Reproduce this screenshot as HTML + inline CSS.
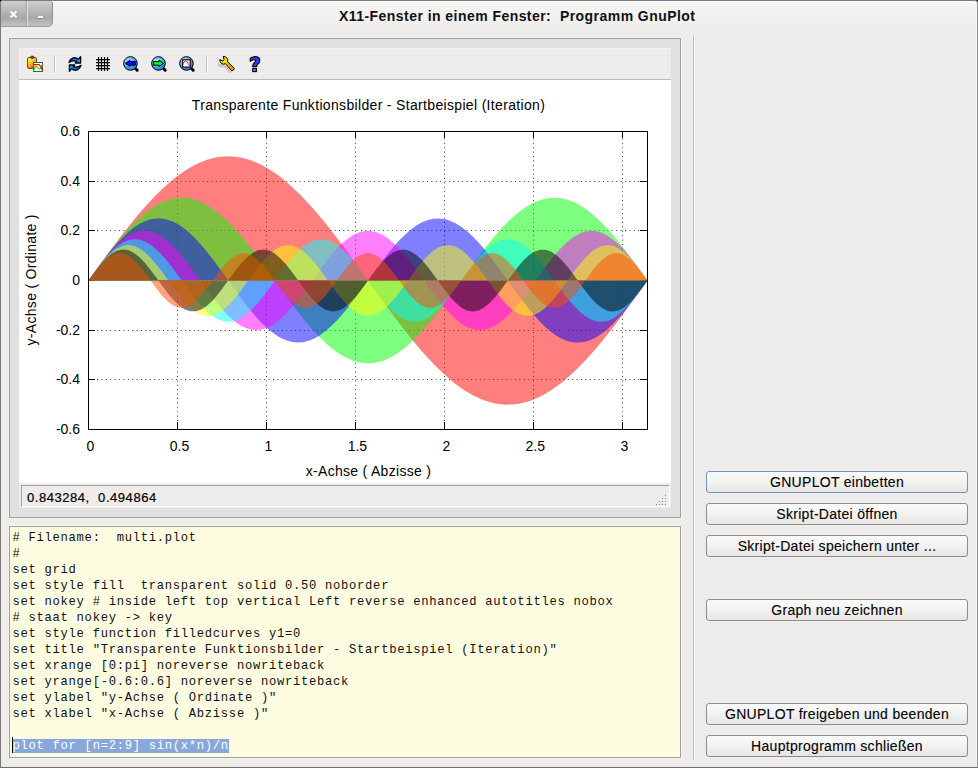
<!DOCTYPE html>
<html><head><meta charset="utf-8">
<style>
html,body{margin:0;padding:0;width:978px;height:768px;overflow:hidden;background:#000}
body{position:relative;font-family:"Liberation Sans",sans-serif}
.win{position:absolute;left:0;top:0;width:978px;height:768px;background:#edeceb;border-radius:4px 4px 0 0;overflow:hidden}
.abs{position:absolute}
.titlebar{position:absolute;left:0;top:0;width:978px;height:34px;background:linear-gradient(#f6f6f5,#edeceb)}
.title{position:absolute;left:339px;top:8px;font-weight:bold;font-size:14px;letter-spacing:0.45px;color:#111;white-space:pre}
.tbtn{position:absolute;top:1px;background:linear-gradient(#cfcecc 0%,#b6b5b3 45%,#a9a8a6 68%,#c4c3c1 100%)}
.group{position:absolute;left:9px;top:38px;width:670px;height:478px;border:1px solid #a19e9b;box-shadow:-1px -1px 0 #f6f5f4, 1px 1px 0 #f6f5f4;background:#e0e0e0}
.toolbar{position:absolute;left:19px;top:48px;width:652px;height:31px;background:#edeceb;box-shadow:inset 1px 1px 0 #f3f2f1}
.plotbg{position:absolute;left:19px;top:80px;width:652px;height:403px;background:#fff}
.tline{position:absolute;left:19px;top:79px;width:652px;height:1px;background:#bcbab8}
.status{position:absolute;left:19px;top:483px;width:652px;height:25px;background:#edeceb}
.sbox{position:absolute;left:21px;top:485px;width:647px;height:20px;border-top:1px solid #a19e9b;border-left:1px solid #a19e9b;border-right:1px solid #fff;border-bottom:1px solid #fff}
.stext{position:absolute;left:27px;top:490px;font-size:13px;letter-spacing:0.55px;color:#000;-webkit-text-stroke:0.2px #000;white-space:pre}
.grip{position:absolute;width:1px;height:1px;background:#8a8886}
.editor{position:absolute;left:9px;top:526px;width:670px;height:230px;border:1px solid #a19e9b;box-shadow:-1px -1px 0 #f6f5f4, 1px 1px 0 #f6f5f4;background:#fffde1}
pre.code{position:absolute;left:12.5px;top:530px;margin:0;font-family:"Liberation Mono",monospace;font-size:12.2px;letter-spacing:0.7px;line-height:16px;color:#111}
.sel{background:#87a8d8;color:#fff}
.splitter{position:absolute;left:693px;top:36px;width:1px;height:724px;background:#c0bfbd;border-right:1px solid #fff}
.btn{position:absolute;left:706px;width:260px;height:20px;border:1px solid #8e8d8b;border-radius:3px;background:linear-gradient(#fbfbfb,#f2f2f1 50%,#e6e5e4);text-align:center;font-size:14px;line-height:20px;letter-spacing:0.3px;color:#000;white-space:pre;-webkit-text-stroke:0.1px #000}
.btn.def{border-color:#7593c0}
svg.plot{position:absolute;left:0;top:0}
.frame{position:absolute;left:0;top:0;width:978px;height:768px;box-sizing:border-box;border:1px solid;border-color:#7a7a7a #8c8c8c #6e6e6e #787878;border-radius:4px 4px 0 0;box-shadow:0 0 0 12px #000, inset -1px 0 0 #fafafa}
</style></head><body>
<div class="win">
<div class="titlebar"></div>
<div class="tbtn" style="left:1px;width:51px;height:25px;border-right:1px solid #8f8f8e;border-bottom:1px solid #9e9e9d;border-radius:4px 0 5px 0"></div>
<div class="abs" style="left:26px;top:1px;width:1px;height:25px;background:#a3a3a1"></div><div class="abs" style="left:27px;top:1px;width:1px;height:25px;background:#e4e4e2"></div>
<svg class="abs" style="left:0;top:0" width="60" height="30"><path d="M10.5 12.2L16.5 18.2M16.5 12.2L10.5 18.2" stroke="#777" stroke-width="2.2" opacity="0.5"/><path d="M10.5 11.5L16.5 17.5M16.5 11.5L10.5 17.5" stroke="#fff" stroke-width="2.2"/><rect x="38" y="18" width="5" height="1" fill="#8a8a8a"/><rect x="38" y="16" width="5" height="2" fill="#fff"/></svg>
<div class="abs" style="left:52px;top:1px;width:925px;height:1px;background:#fdfdfd"></div>
<div class="title">X11-Fenster in einem Fenster:  Programm GnuPlot</div>
<div class="group"></div>
<div class="toolbar"></div>
<div class="tline"></div>
<div class="plotbg"></div>
<div class="status"></div>
<div class="sbox"></div>
<div class="stext">0.843284,  0.494864</div>
<div class="grip" style="left:665px;top:495px"></div><div class="grip" style="left:665px;top:498px"></div><div class="grip" style="left:662px;top:498px"></div><div class="grip" style="left:665px;top:501px"></div><div class="grip" style="left:662px;top:501px"></div><div class="grip" style="left:659px;top:501px"></div><div class="grip" style="left:665px;top:504px"></div><div class="grip" style="left:662px;top:504px"></div><div class="grip" style="left:659px;top:504px"></div><div class="grip" style="left:656px;top:504px"></div>
<div class="editor"></div>
<pre class="code"># Filename:  multi.plot
#
set grid
set style fill  transparent solid 0.50 noborder
set nokey # inside left top vertical Left reverse enhanced autotitles nobox
# staat nokey -&gt; key
set style function filledcurves y1=0
set title &quot;Transparente Funktionsbilder - Startbeispiel (Iteration)&quot;
set xrange [0:pi] noreverse nowriteback
set yrange[-0.6:0.6] noreverse nowriteback
set ylabel &quot;y-Achse ( Ordinate )&quot;
set xlabel &quot;x-Achse ( Abzisse )&quot;

<span class="sel">plot for [n=2:9] sin(x*n)/n</span></pre>
<div class="abs" style="left:12px;top:737px;width:1px;height:16px;background:#000"></div>
<div class="splitter"></div>
<div class="btn def" style="top:471px">GNUPLOT einbetten</div><div class="btn" style="top:503px">Skript-Datei öffnen</div><div class="btn" style="top:535px">Skript-Datei speichern unter ...</div><div class="btn" style="top:599px">Graph neu zeichnen</div><div class="btn" style="top:703px">GNUPLOT freigeben und beenden</div><div class="btn" style="top:735px">Hauptprogramm schließen</div>
<svg class="plot" width="978" height="768" viewBox="0 0 978 768">
<g fill="none" stroke="#000" stroke-width="1" stroke-dasharray="1 3.4" opacity="0.75"><line x1="177.5" y1="421" x2="177.5" y2="131" /><line x1="266.5" y1="421" x2="266.5" y2="131" /><line x1="355.5" y1="421" x2="355.5" y2="131" /><line x1="444.5" y1="421" x2="444.5" y2="131" /><line x1="533.5" y1="421" x2="533.5" y2="131" /><line x1="622.5" y1="421" x2="622.5" y2="131" /><line x1="97" y1="379.5" x2="647" y2="379.5" /><line x1="97" y1="330.5" x2="647" y2="330.5" /><line x1="97" y1="280.5" x2="647" y2="280.5" /><line x1="97" y1="230.5" x2="647" y2="230.5" /><line x1="97" y1="181.5" x2="647" y2="181.5" /></g>
<path d="M177.5 429V422M177.5 131V138M266.5 429V422M266.5 131V138M355.5 429V422M355.5 131V138M444.5 429V422M444.5 131V138M533.5 429V422M533.5 131V138M622.5 429V422M622.5 131V138M88 429.5H95M647 429.5H640M88 379.5H95M647 379.5H640M88 330.5H95M647 330.5H640M88 280.5H95M647 280.5H640M88 230.5H95M647 230.5H640M88 181.5H95M647 181.5H640M88 131.5H95M647 131.5H640" stroke="#000" stroke-width="1" fill="none"/>
<path d="M88.5 280.5L88.50 280.50L94.15 272.62L99.79 264.78L105.44 257.00L111.09 249.32L116.73 241.76L122.38 234.35L128.03 227.13L133.67 220.13L139.32 213.37L144.96 206.88L150.61 200.69L156.26 194.82L161.90 189.29L167.55 184.13L173.20 179.36L178.84 174.99L184.49 171.05L190.14 167.55L195.78 164.51L201.43 161.93L207.08 159.83L212.72 158.22L218.37 157.10L224.02 156.47L229.66 156.35L235.31 156.72L240.95 157.60L246.60 158.97L252.25 160.82L257.89 163.16L263.54 165.97L269.19 169.25L274.83 172.97L280.48 177.12L286.13 181.69L291.77 186.66L297.42 192.01L303.07 197.71L308.71 203.75L314.36 210.09L320.01 216.72L325.65 223.60L331.30 230.72L336.94 238.03L342.59 245.52L348.24 253.14L353.88 260.88L359.53 268.70L365.18 276.56L370.82 284.44L376.47 292.30L382.12 300.12L387.76 307.86L393.41 315.48L399.06 322.97L404.70 330.28L410.35 337.40L415.99 344.28L421.64 350.91L427.29 357.25L432.93 363.29L438.58 368.99L444.23 374.34L449.87 379.31L455.52 383.88L461.17 388.03L466.81 391.75L472.46 395.03L478.11 397.84L483.75 400.18L489.40 402.03L495.05 403.40L500.69 404.28L506.34 404.65L511.98 404.53L517.63 403.90L523.28 402.78L528.92 401.17L534.57 399.07L540.22 396.49L545.86 393.45L551.51 389.95L557.16 386.01L562.80 381.64L568.45 376.87L574.10 371.71L579.74 366.18L585.39 360.31L591.04 354.12L596.68 347.63L602.33 340.87L607.97 333.87L613.62 326.65L619.27 319.24L624.91 311.68L630.56 304.00L636.21 296.22L641.85 288.38L647.50 280.50L647.5 280.5 Z" fill="#ff0000" fill-opacity="0.5"/>
<path d="M88.5 280.5L88.50 280.50L94.15 272.63L99.79 264.83L105.44 257.18L111.09 249.73L116.73 242.57L122.38 235.75L128.03 229.33L133.67 223.38L139.32 217.94L144.96 213.07L150.61 208.81L156.26 205.20L161.90 202.27L167.55 200.06L173.20 198.56L178.84 197.82L184.49 197.82L190.14 198.56L195.78 200.06L201.43 202.27L207.08 205.20L212.72 208.81L218.37 213.07L224.02 217.94L229.66 223.38L235.31 229.33L240.95 235.75L246.60 242.57L252.25 249.73L257.89 257.18L263.54 264.83L269.19 272.63L274.83 280.50L280.48 288.37L286.13 296.17L291.77 303.82L297.42 311.27L303.07 318.43L308.71 325.25L314.36 331.67L320.01 337.62L325.65 343.06L331.30 347.93L336.94 352.19L342.59 355.80L348.24 358.73L353.88 360.94L359.53 362.44L365.18 363.18L370.82 363.18L376.47 362.44L382.12 360.94L387.76 358.73L393.41 355.80L399.06 352.19L404.70 347.93L410.35 343.06L415.99 337.62L421.64 331.67L427.29 325.25L432.93 318.43L438.58 311.27L444.23 303.82L449.87 296.17L455.52 288.37L461.17 280.50L466.81 272.63L472.46 264.83L478.11 257.18L483.75 249.73L489.40 242.57L495.05 235.75L500.69 229.33L506.34 223.38L511.98 217.94L517.63 213.07L523.28 208.81L528.92 205.20L534.57 202.27L540.22 200.06L545.86 198.56L551.51 197.82L557.16 197.82L562.80 198.56L568.45 200.06L574.10 202.27L579.74 205.20L585.39 208.81L591.04 213.07L596.68 217.94L602.33 223.38L607.97 229.33L613.62 235.75L619.27 242.57L624.91 249.73L630.56 257.18L636.21 264.83L641.85 272.63L647.50 280.50L647.5 280.5 Z" fill="#00ff00" fill-opacity="0.5"/>
<path d="M88.5 280.5L88.50 280.50L94.15 272.64L99.79 264.91L105.44 257.43L111.09 250.32L116.73 243.69L122.38 237.66L128.03 232.31L133.67 227.75L139.32 224.03L144.96 221.22L150.61 219.36L156.26 218.49L161.90 218.61L167.55 219.73L173.20 221.83L178.84 224.87L184.49 228.81L190.14 233.58L195.78 239.10L201.43 245.30L207.08 252.05L212.72 259.27L218.37 266.82L224.02 274.60L229.66 282.47L235.31 290.31L240.95 297.99L246.60 305.39L252.25 312.39L257.89 318.88L263.54 324.75L269.19 329.90L274.83 334.27L280.48 337.76L286.13 340.34L291.77 341.95L297.42 342.58L303.07 342.20L308.71 340.83L314.36 338.50L320.01 335.22L325.65 331.07L331.30 326.11L336.94 320.41L342.59 314.06L348.24 307.18L353.88 299.87L359.53 292.25L365.18 284.44L370.82 276.56L376.47 268.75L382.12 261.13L387.76 253.82L393.41 246.94L399.06 240.59L404.70 234.89L410.35 229.93L415.99 225.78L421.64 222.50L427.29 220.17L432.93 218.80L438.58 218.42L444.23 219.05L449.87 220.66L455.52 223.24L461.17 226.73L466.81 231.10L472.46 236.25L478.11 242.12L483.75 248.61L489.40 255.61L495.05 263.01L500.69 270.69L506.34 278.53L511.98 286.40L517.63 294.18L523.28 301.73L528.92 308.95L534.57 315.70L540.22 321.90L545.86 327.42L551.51 332.19L557.16 336.13L562.80 339.17L568.45 341.27L574.10 342.39L579.74 342.51L585.39 341.64L591.04 339.78L596.68 336.97L602.33 333.25L607.97 328.69L613.62 323.34L619.27 317.31L624.91 310.68L630.56 303.57L636.21 296.09L641.85 288.36L647.50 280.50L647.5 280.5 Z" fill="#0000ff" fill-opacity="0.5"/>
<path d="M88.5 280.5L88.50 280.50L94.15 272.65L99.79 265.00L105.44 257.74L111.09 251.05L116.73 245.10L122.38 240.04L128.03 236.00L133.67 233.07L139.32 231.34L144.96 230.84L150.61 231.59L156.26 233.56L161.90 236.72L167.55 240.98L173.20 246.23L178.84 252.34L184.49 259.15L190.14 266.51L195.78 274.21L201.43 282.08L207.08 289.90L212.72 297.49L218.37 304.65L224.02 311.20L229.66 316.98L235.31 321.85L240.95 325.68L246.60 328.37L252.25 329.86L257.89 330.11L263.54 329.11L269.19 326.90L274.83 323.51L280.48 319.05L286.13 313.62L291.77 307.35L297.42 300.41L303.07 292.97L308.71 285.22L314.36 277.35L320.01 269.56L325.65 262.04L331.30 254.99L336.94 248.57L342.59 242.96L348.24 238.30L353.88 234.69L359.53 232.23L365.18 230.99L370.82 230.99L376.47 232.23L382.12 234.69L387.76 238.30L393.41 242.96L399.06 248.57L404.70 254.99L410.35 262.04L415.99 269.56L421.64 277.35L427.29 285.22L432.93 292.97L438.58 300.41L444.23 307.35L449.87 313.62L455.52 319.05L461.17 323.51L466.81 326.90L472.46 329.11L478.11 330.11L483.75 329.86L489.40 328.37L495.05 325.68L500.69 321.85L506.34 316.98L511.98 311.20L517.63 304.65L523.28 297.49L528.92 289.90L534.57 282.08L540.22 274.21L545.86 266.51L551.51 259.15L557.16 252.34L562.80 246.23L568.45 240.98L574.10 236.72L579.74 233.56L585.39 231.59L591.04 230.84L596.68 231.34L602.33 233.07L607.97 236.00L613.62 240.04L619.27 245.10L624.91 251.05L630.56 257.74L636.21 265.00L641.85 272.65L647.50 280.50L647.5 280.5 Z" fill="#ff00ff" fill-opacity="0.5"/>
<path d="M88.5 280.5L88.50 280.50L94.15 272.67L99.79 265.12L105.44 258.12L111.09 251.94L116.73 246.79L122.38 242.85L128.03 240.28L133.67 239.16L139.32 239.53L144.96 241.39L150.61 244.66L156.26 249.22L161.90 254.92L167.55 261.53L173.20 268.84L178.84 276.57L184.49 284.43L190.14 292.16L195.78 299.47L201.43 306.08L207.08 311.78L212.72 316.34L218.37 319.61L224.02 321.47L229.66 321.84L235.31 320.72L240.95 318.15L246.60 314.21L252.25 309.06L257.89 302.88L263.54 295.88L269.19 288.33L274.83 280.50L280.48 272.67L286.13 265.12L291.77 258.12L297.42 251.94L303.07 246.79L308.71 242.85L314.36 240.28L320.01 239.16L325.65 239.53L331.30 241.39L336.94 244.66L342.59 249.22L348.24 254.92L353.88 261.53L359.53 268.84L365.18 276.57L370.82 284.43L376.47 292.16L382.12 299.47L387.76 306.08L393.41 311.78L399.06 316.34L404.70 319.61L410.35 321.47L415.99 321.84L421.64 320.72L427.29 318.15L432.93 314.21L438.58 309.06L444.23 302.88L449.87 295.88L455.52 288.33L461.17 280.50L466.81 272.67L472.46 265.12L478.11 258.12L483.75 251.94L489.40 246.79L495.05 242.85L500.69 240.28L506.34 239.16L511.98 239.53L517.63 241.39L523.28 244.66L528.92 249.22L534.57 254.92L540.22 261.53L545.86 268.84L551.51 276.57L557.16 284.43L562.80 292.16L568.45 299.47L574.10 306.08L579.74 311.78L585.39 316.34L591.04 319.61L596.68 321.47L602.33 321.84L607.97 320.72L613.62 318.15L619.27 314.21L624.91 309.06L630.56 302.88L636.21 295.88L641.85 288.33L647.50 280.50L647.5 280.5 Z" fill="#00ffff" fill-opacity="0.5"/>
<path d="M88.5 280.5L88.50 280.50L94.15 272.68L99.79 265.25L105.44 258.57L111.09 252.97L116.73 248.71L122.38 246.02L128.03 245.03L133.67 245.78L139.32 248.23L144.96 252.27L150.61 257.70L156.26 264.24L161.90 271.59L167.55 279.37L173.20 287.21L178.84 294.72L184.49 301.53L190.14 307.31L195.78 311.77L201.43 314.69L207.08 315.94L212.72 315.44L218.37 313.22L224.02 309.40L229.66 304.15L235.31 297.75L240.95 290.49L246.60 282.75L252.25 274.89L257.89 267.31L263.54 260.38L269.19 254.44L274.83 249.78L280.48 246.62L286.13 245.14L291.77 245.38L297.42 247.36L303.07 250.96L308.71 256.02L314.36 262.28L320.01 269.43L325.65 277.13L331.30 284.99L336.94 292.63L342.59 299.68L348.24 305.78L353.88 310.65L359.53 314.03L365.18 315.76L370.82 315.76L376.47 314.03L382.12 310.65L387.76 305.78L393.41 299.68L399.06 292.63L404.70 284.99L410.35 277.13L415.99 269.43L421.64 262.28L427.29 256.02L432.93 250.96L438.58 247.36L444.23 245.38L449.87 245.14L455.52 246.62L461.17 249.78L466.81 254.44L472.46 260.38L478.11 267.31L483.75 274.89L489.40 282.75L495.05 290.49L500.69 297.75L506.34 304.15L511.98 309.40L517.63 313.22L523.28 315.44L528.92 315.94L534.57 314.69L540.22 311.77L545.86 307.31L551.51 301.53L557.16 294.72L562.80 287.21L568.45 279.37L574.10 271.59L579.74 264.24L585.39 257.70L591.04 252.27L596.68 248.23L602.33 245.78L607.97 245.03L613.62 246.02L619.27 248.71L624.91 252.97L630.56 258.57L636.21 265.25L641.85 272.68L647.50 280.50L647.5 280.5 Z" fill="#ffff00" fill-opacity="0.5"/>
<path d="M88.5 280.5L88.50 280.50L94.15 272.70L99.79 265.41L105.44 259.08L111.09 254.12L116.73 250.86L122.38 249.49L128.03 250.12L133.67 252.69L139.32 257.04L144.96 262.90L150.61 269.88L156.26 277.55L161.90 285.40L167.55 292.95L173.20 299.69L178.84 305.20L184.49 309.13L190.14 311.23L195.78 311.35L201.43 309.50L207.08 305.79L212.72 300.45L218.37 293.84L224.02 286.37L229.66 278.53L235.31 270.81L240.95 263.72L246.60 257.70L252.25 253.14L257.89 250.33L263.54 249.46L269.19 250.58L274.83 253.62L280.48 258.38L286.13 264.55L291.77 271.75L297.42 279.52L303.07 287.34L308.71 294.72L314.36 301.20L320.01 306.34L325.65 309.83L331.30 311.44L336.94 311.07L342.59 308.74L348.24 304.59L353.88 298.90L359.53 292.04L365.18 284.43L370.82 276.57L376.47 268.96L382.12 262.10L387.76 256.41L393.41 252.26L399.06 249.93L404.70 249.56L410.35 251.17L415.99 254.66L421.64 259.80L427.29 266.28L432.93 273.66L438.58 281.48L444.23 289.25L449.87 296.45L455.52 302.62L461.17 307.38L466.81 310.42L472.46 311.54L478.11 310.67L483.75 307.86L489.40 303.30L495.05 297.28L500.69 290.19L506.34 282.47L511.98 274.63L517.63 267.16L523.28 260.55L528.92 255.21L534.57 251.50L540.22 249.65L545.86 249.77L551.51 251.87L557.16 255.80L562.80 261.31L568.45 268.05L574.10 275.60L579.74 283.45L585.39 291.12L591.04 298.10L596.68 303.96L602.33 308.31L607.97 310.88L613.62 311.51L619.27 310.14L624.91 306.88L630.56 301.92L636.21 295.59L641.85 288.30L647.50 280.50L647.5 280.5 Z" fill="#000000" fill-opacity="0.5"/>
<path d="M88.5 280.5L88.50 280.50L94.15 272.73L99.79 265.58L105.44 259.65L111.09 255.40L116.73 253.19L122.38 253.19L128.03 255.40L133.67 259.65L139.32 265.58L144.96 272.73L150.61 280.50L156.26 288.27L161.90 295.42L167.55 301.35L173.20 305.60L178.84 307.81L184.49 307.81L190.14 305.60L195.78 301.35L201.43 295.42L207.08 288.27L212.72 280.50L218.37 272.73L224.02 265.58L229.66 259.65L235.31 255.40L240.95 253.19L246.60 253.19L252.25 255.40L257.89 259.65L263.54 265.58L269.19 272.73L274.83 280.50L280.48 288.27L286.13 295.42L291.77 301.35L297.42 305.60L303.07 307.81L308.71 307.81L314.36 305.60L320.01 301.35L325.65 295.42L331.30 288.27L336.94 280.50L342.59 272.73L348.24 265.58L353.88 259.65L359.53 255.40L365.18 253.19L370.82 253.19L376.47 255.40L382.12 259.65L387.76 265.58L393.41 272.73L399.06 280.50L404.70 288.27L410.35 295.42L415.99 301.35L421.64 305.60L427.29 307.81L432.93 307.81L438.58 305.60L444.23 301.35L449.87 295.42L455.52 288.27L461.17 280.50L466.81 272.73L472.46 265.58L478.11 259.65L483.75 255.40L489.40 253.19L495.05 253.19L500.69 255.40L506.34 259.65L511.98 265.58L517.63 272.73L523.28 280.50L528.92 288.27L534.57 295.42L540.22 301.35L545.86 305.60L551.51 307.81L557.16 307.81L562.80 305.60L568.45 301.35L574.10 295.42L579.74 288.27L585.39 280.50L591.04 272.73L596.68 265.58L602.33 259.65L607.97 255.40L613.62 253.19L619.27 253.19L624.91 255.40L630.56 259.65L636.21 265.58L641.85 272.73L647.50 280.50L647.5 280.5 Z" fill="#ff4c00" fill-opacity="0.5"/>
<rect x="88.5" y="131.5" width="559" height="298" fill="none" stroke="#000" stroke-width="1"/>
<g font-family="Liberation Sans" font-size="14" fill="#000" letter-spacing="0"><text x="90.5" y="451" text-anchor="middle">0</text><text x="179.5" y="451" text-anchor="middle">0.5</text><text x="268.4" y="451" text-anchor="middle">1</text><text x="357.4" y="451" text-anchor="middle">1.5</text><text x="446.4" y="451" text-anchor="middle">2</text><text x="535.3" y="451" text-anchor="middle">2.5</text><text x="624.3" y="451" text-anchor="middle">3</text><text x="80" y="434.0" text-anchor="end">-0.6</text><text x="80" y="384.3" text-anchor="end">-0.4</text><text x="80" y="334.7" text-anchor="end">-0.2</text><text x="80" y="285.0" text-anchor="end">0</text><text x="80" y="235.3" text-anchor="end">0.2</text><text x="80" y="185.7" text-anchor="end">0.4</text><text x="80" y="136.0" text-anchor="end">0.6</text>
<text x="368.5" y="110.3" text-anchor="middle" letter-spacing="0.33">Transparente Funktionsbilder - Startbeispiel (Iteration)</text>
<text x="368.5" y="476" text-anchor="middle" letter-spacing="0.3">x-Achse ( Abzisse )</text>
<text transform="translate(35.5 279.8) rotate(-90)" text-anchor="middle" letter-spacing="0.3">y-Achse ( Ordinate )</text>
</g>
</svg>
<svg class="icons" width="300" height="90" viewBox="0 0 300 90" style="position:absolute;left:0;top:0">
<defs>
<linearGradient id="gclip" x1="0" y1="0" x2="0.6" y2="1"><stop offset="0" stop-color="#ffff40"/><stop offset="0.4" stop-color="#ffd820"/><stop offset="1" stop-color="#e85800"/></linearGradient>
<linearGradient id="gref" x1="0" y1="0" x2="1" y2="0"><stop offset="0" stop-color="#0030e0"/><stop offset="1" stop-color="#00b0ff"/></linearGradient>
<linearGradient id="gref2" x1="1" y1="0" x2="0" y2="0"><stop offset="0" stop-color="#0030e0"/><stop offset="1" stop-color="#00b0ff"/></linearGradient>
<radialGradient id="glens" cx="0.35" cy="0.3" r="0.75"><stop offset="0" stop-color="#b0e0ff"/><stop offset="0.6" stop-color="#40a8f8"/><stop offset="1" stop-color="#0a80e8"/></radialGradient>
<linearGradient id="gwr" x1="0" y1="0" x2="1" y2="1"><stop offset="0" stop-color="#ffff00"/><stop offset="0.45" stop-color="#ffd000"/><stop offset="0.6" stop-color="#ffa000"/><stop offset="1" stop-color="#ff9000"/></linearGradient>
<filter id="blur1" x="-20%" y="-20%" width="140%" height="140%"><feGaussianBlur stdDeviation="0.7"/></filter>
</defs>
<!-- clipboard -->
<rect x="27.5" y="57.5" width="9" height="11" rx="1.5" fill="url(#gclip)" stroke="#4a3410" stroke-width="0.85"/>
<rect x="30.5" y="56" width="3.5" height="2.5" rx="1" fill="#555" stroke="#333" stroke-width="0.6"/>
<rect x="33.5" y="62.5" width="9" height="9" fill="#fff" stroke="#555" stroke-width="1"/>
<path d="M33.8 71 Q34.5 66 35.8 66.3 Q37 66.5 38.5 68.5 Q39.8 69.5 41 67.5 L42.4 64.2" fill="none" stroke="#00e000" stroke-width="1.1"/>
<path d="M33.8 64.6 L39 64.6 Q40.2 64.8 42.4 70.5" fill="none" stroke="#f00" stroke-width="1.1"/>
<!-- separator -->
<rect x="54" y="55" width="1" height="18" fill="#c6c5c3"/><rect x="55" y="55" width="1" height="18" fill="#fbfbfa"/>
<!-- refresh -->
<path d="M69 62.5 C70 58.5 75 56 78.2 59.4 L80.6 56.8 L80.6 63 L75.3 63 L76.8 61.4 C75 60.8 72 60.6 69 62.5 Z" fill="url(#gref)" stroke="#000" stroke-width="1.3" stroke-linejoin="round"/>
<path d="M81 65.4 C80 69.5 75 72 71.8 68.6 L69.4 71.2 L69.4 65 L74.7 65 L73.2 66.6 C75 67.2 78 67.4 81 65.4 Z" fill="url(#gref2)" stroke="#000" stroke-width="1.3" stroke-linejoin="round"/>
<!-- grid -->
<rect x="96" y="57" width="14" height="14" rx="2" fill="#fff" opacity="0.85"/>
<path d="M98.5 57V71M101.5 57V71M104.5 57V71M107.5 57V71M96 59.5H110M96 62.5H110M96 65.5H110M96 68.5H110" stroke="#000" stroke-width="1.25"/>
<!-- zoom prev -->
<line x1="135.5" y1="68.5" x2="137.2" y2="70.2" stroke="#000" stroke-width="3" stroke-linecap="round"/>
<circle cx="130.45" cy="63.45" r="6.8" fill="url(#glens)" stroke="#000" stroke-width="1"/>
<path d="M125.5 63.4 L129.8 60.3 L129.8 61.6 L135.4 61.6 L135.4 65.2 L129.8 65.2 L129.8 66.5 Z" fill="#0000ff" stroke="#000" stroke-width="1" stroke-linejoin="round"/>
<!-- zoom next -->
<line x1="163.5" y1="68.5" x2="165.2" y2="70.2" stroke="#000" stroke-width="3" stroke-linecap="round"/>
<circle cx="158.45" cy="63.45" r="6.8" fill="url(#glens)" stroke="#000" stroke-width="1"/>
<path d="M163.4 63.4 L159.1 60.3 L159.1 61.6 L153.5 61.6 L153.5 65.2 L159.1 65.2 L159.1 66.5 Z" fill="#00ff00" stroke="#000" stroke-width="1" stroke-linejoin="round"/>
<!-- autoscale -->
<line x1="191.5" y1="68.5" x2="193.2" y2="70.2" stroke="#000" stroke-width="3" stroke-linecap="round"/>
<circle cx="186.45" cy="63.45" r="6.8" fill="url(#glens)" stroke="#000" stroke-width="1"/>
<rect x="182.7" y="59.8" width="7.5" height="7.3" fill="#fff" stroke="#000" stroke-width="1.1"/>
<path d="M183.3 63.6 Q184 61.3 185 61.2 L186.6 61.2 Q187.5 61.5 188.3 64.5 Q189 65.8 190 65.7" fill="none" stroke="#f00" stroke-width="0.9"/>
<!-- separator -->
<rect x="206" y="55" width="1" height="18" fill="#c6c5c3"/><rect x="207" y="55" width="1" height="18" fill="#fbfbfa"/>
<!-- wrench shadow -->
<path transform="translate(-2.5 3)" d="M232.2 70.2 Q233.8 70 234.2 68.4 L227.6 61.8 Q228.3 59.4 226.8 57.8 Q225 56.2 223.2 56.5 L224.2 59.6 L222.6 61 L219.8 59.6 Q219.7 61.8 221.3 63.3 Q223.2 64.9 225.4 63.6 Z" fill="#8c8474" opacity="0.35" filter="url(#blur1)"/>
<!-- wrench -->
<path d="M231.8 70.8 Q233.9 70.6 234.2 68.4 L227.6 61.8 Q228.3 59.4 226.8 57.8 Q225 56.2 223.2 56.5 L224.2 59.6 L222.6 61 L219.8 59.6 Q219.7 61.8 221.3 63.3 Q223.2 64.9 225.4 63.6 Z" fill="url(#gwr)" stroke="#000" stroke-width="1" stroke-linejoin="round"/>
<!-- help -->
<path d="M250.2 58.2 Q252.6 56.6 255.6 56.6 Q259.8 56.9 259.8 60.4 Q259.8 62.8 257.6 64.2 Q256.8 64.9 256.6 66.6 L252.6 66.6 Q252.6 64.2 254.6 62.5 Q255.9 61.4 255.7 60.6 Q255.3 59.6 253.8 59.7 Q252 59.8 250.2 61.2 Z" fill="#3838ff" stroke="#000" stroke-width="1.1" stroke-linejoin="round"/>
<rect x="252.7" y="68.5" width="3.7" height="3.1" fill="#7070ff" stroke="#000" stroke-width="1.1"/>
</svg>

<div class="frame"></div>
</div>
</body></html>
